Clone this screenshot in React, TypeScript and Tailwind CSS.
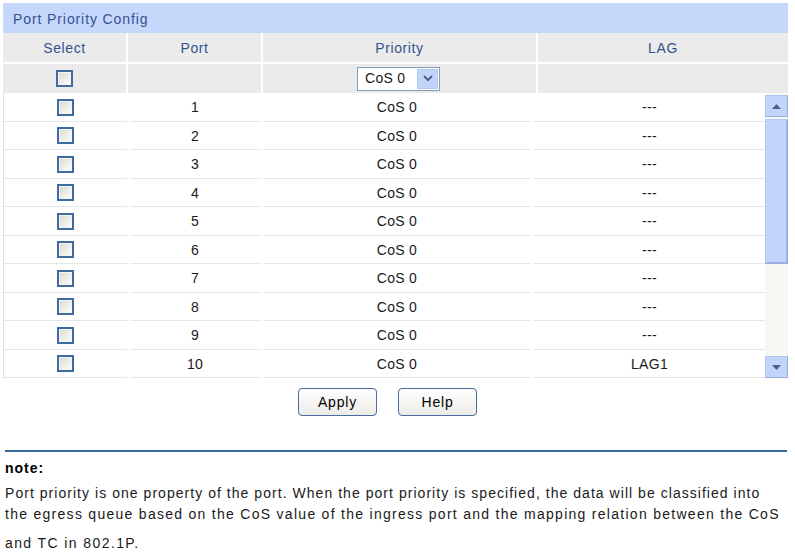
import React from "react";

const rows = [
  { port: 1, lag: "---" },
  { port: 2, lag: "---" },
  { port: 3, lag: "---" },
  { port: 4, lag: "---" },
  { port: 5, lag: "---" },
  { port: 6, lag: "---" },
  { port: 7, lag: "---" },
  { port: 8, lag: "---" },
  { port: 9, lag: "---" },
  { port: 10, lag: "LAG1" },
];

const CheckBox = () => (
  <span className="inline-block w-[17px] h-[17px] border-2 border-[#3f6b9e] bg-gradient-to-br from-[#d8d8d2] to-white shadow-[inset_0_0_0_1px_#f4f4f0]" />
);

const ArrowBtn = ({ down }: { down?: boolean }) => (
  <div className="h-[22px] w-full bg-[#c3d4fb] border border-[#b0c4f2] border-r-[#98aee0] border-b-[#98aee0] flex items-center justify-center">
    <svg width="9" height="5" viewBox="0 0 9 5">
      {down ? (
        <polygon points="0,0 9,0 4.5,5" fill="#4d6185" />
      ) : (
        <polygon points="0,5 9,5 4.5,0" fill="#4d6185" />
      )}
    </svg>
  </div>
);

export default function App() {
  return (
    <div className="w-[795px] h-[552px] bg-white text-[14px] text-[#1a1a1a] overflow-hidden font-['Liberation_Sans',Arial,sans-serif]">
      <div className="ml-[3px] mt-[3px] w-[785px]">
        <div className="h-[30px] bg-[#c5d8fc] text-[#34528e] tracking-[0.9px] flex items-center pl-[10px] pt-[3px]">
          Port Priority Config
        </div>
        <div className="grid grid-cols-[123px_133px_273px_250px] gap-x-[2px] bg-white text-[#34528e] tracking-[0.6px]">
          <div className="h-[29px] bg-[#ebebeb] flex items-center justify-center pt-[2px]">Select</div>
          <div className="h-[29px] bg-[#ebebeb] flex items-center justify-center pt-[2px]">Port</div>
          <div className="h-[29px] bg-[#ebebeb] flex items-center justify-center pt-[2px]">Priority</div>
          <div className="h-[29px] bg-[#ebebeb] flex items-center justify-center pt-[2px]">LAG</div>
        </div>
        <div className="grid grid-cols-[123px_133px_273px_250px] gap-x-[2px] bg-white mt-[2px]">
          <div className="h-[29px] bg-[#ebebeb] flex items-center justify-center">
            <CheckBox />
          </div>
          <div className="h-[29px] bg-[#ebebeb]" />
          <div className="h-[29px] bg-[#ebebeb] flex items-center justify-center">
            <div className="w-[83px] h-[24px] border border-[#7f9db9] bg-white flex items-center pl-[7px] pr-[1px] ml-[-2px] tracking-[0.3px]">
              <span className="flex-1">CoS 0</span>
              <span className="w-[21px] h-[20px] bg-[#c3d4fb] border border-[#b4c7f3] flex items-center justify-center">
                <svg width="10" height="7" viewBox="0 0 10 7">
                  <polyline points="1,1 5,5 9,1" fill="none" stroke="#4d6185" strokeWidth="2" />
                </svg>
              </span>
            </div>
          </div>
          <div className="h-[29px] bg-[#ebebeb]" />
        </div>
        <div className="flex h-[286px] border-l border-[#e2e2e2]">
          <div className="flex-1 tracking-[0.3px]">
            {rows.map((r) => (
              <div
                key={r.port}
                className="grid grid-cols-[123px_130px_268px_1fr] gap-x-[3px] h-[28.5px]"
              >
                <div className="border-b border-[#e6e6e6] flex items-center justify-center pt-[1px]">
                  <CheckBox />
                </div>
                <div className="border-b border-[#e6e6e6] flex items-center justify-center pt-[2px]">{r.port}</div>
                <div className="border-b border-[#e6e6e6] flex items-center justify-center pt-[2px]">CoS 0</div>
                <div className="border-b border-[#e6e6e6] flex items-center justify-center pt-[2px]">{r.lag}</div>
              </div>
            ))}
          </div>
          <div className="w-[23px] bg-[#f7f7f4] flex flex-col pt-[2px] pb-[1px]">
            <ArrowBtn />
            <div className="h-[145px] mt-[2px] bg-[#c3d4fb] border border-[#b8caf4] border-r-2 border-r-[#9ab0e2] border-b-2 border-b-[#9ab0e2]" />
            <div className="flex-1" />
            <ArrowBtn down />
          </div>
        </div>
        <div className="flex justify-center gap-[21px] mt-[9px] pr-[16px]">
          <button className="w-[79px] h-[28px] rounded-[4px] border border-[#466b9c] bg-gradient-to-b from-white to-[#ecebe6] text-black tracking-[0.8px] pt-[1px]">
            Apply
          </button>
          <button className="w-[79px] h-[28px] rounded-[4px] border border-[#466b9c] bg-gradient-to-b from-white to-[#ecebe6] text-black tracking-[0.8px] pt-[1px]">
            Help
          </button>
        </div>
      </div>
      <div className="ml-[5px] mt-[34px] w-[782px] h-[2px] bg-[#2f6b9c]" />
      <div className="ml-[5px] mt-[6px] text-[14px] font-bold tracking-[1px] text-black">note:</div>
      <div className="ml-[5px] mt-[4px] leading-[21px] text-[#1a1a1a]">
        <div className="tracking-[1.04px]">Port priority is one property of the port. When the port priority is specified, the data will be classified into</div>
        <div className="tracking-[1.28px]">the egress queue based on the CoS value of the ingress port and the mapping relation between the CoS</div>
        <div className="mt-[8px] tracking-[1.4px]">and TC in 802.1P.</div>
      </div>
    </div>
  );
}
